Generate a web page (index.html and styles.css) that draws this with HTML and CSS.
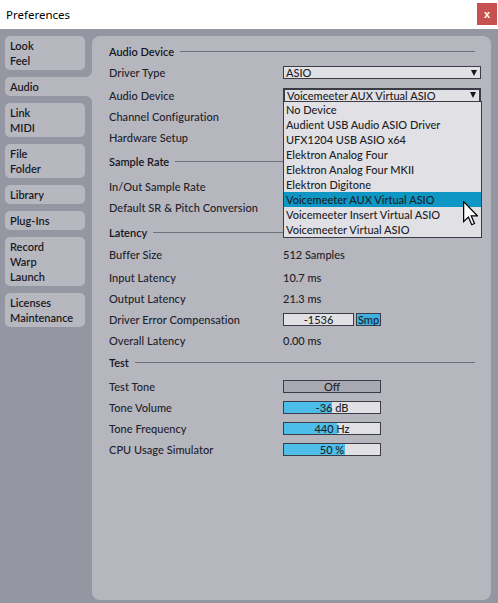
FILE: index.html
```html
<!DOCTYPE html>
<html lang="en">
<head>
    <meta charset="UTF-8">
    <meta name="viewport" content="width=device-width, initial-scale=1.0">
    <title>Preferences</title>
    <link rel="stylesheet" href="styles.css">
</head>
<body>
    <div class="window">
        <header class="titlebar">
            <span class="titlebar__title">Preferences</span>
            <button class="titlebar__close" aria-label="Close">x</button>
        </header>

        <div class="prefs">
            <nav class="tabs">
                <div class="tab">Look<br>Feel</div>
                <div class="tab tab--active">Audio</div>
                <div class="tab">Link<br>MIDI</div>
                <div class="tab">File<br>Folder</div>
                <div class="tab">Library</div>
                <div class="tab">Plug-Ins</div>
                <div class="tab">Record<br>Warp<br>Launch</div>
                <div class="tab">Licenses<br>Maintenance</div>
            </nav>

            <main class="panel">
                <div class="section">Audio Device</div>
                <div class="row">
                    <span class="row__label">Driver Type</span>
                    <div class="select">ASIO<span class="select__arrow"></span></div>
                </div>
                <div class="row row--mt2">
                    <span class="row__label">Audio Device</span>
                    <div class="dropdown">
                        <div class="select select--open">Voicemeeter AUX Virtual ASIO<span class="select__arrow"></span></div>
                        <ul class="dropdown__list">
                            <li class="dropdown__item">No Device</li>
                            <li class="dropdown__item">Audient USB Audio ASIO Driver</li>
                            <li class="dropdown__item">UFX1204 USB ASIO x64</li>
                            <li class="dropdown__item">Elektron Analog Four</li>
                            <li class="dropdown__item">Elektron Analog Four MKII</li>
                            <li class="dropdown__item">Elektron Digitone</li>
                            <li class="dropdown__item dropdown__item--hover">Voicemeeter AUX Virtual ASIO</li>
                            <li class="dropdown__item">Voicemeeter Insert Virtual ASIO</li>
                            <li class="dropdown__item">Voicemeeter Virtual ASIO</li>
                        </ul>
                        <svg class="cursor" viewBox="0 0 12 20" width="15" height="25">
                            <path d="M0.5 0.5 V16.5 L4.3 12.8 L7 19 L9.2 18 L6.6 11.9 H11.5 Z" fill="#fff" stroke="#000" stroke-width="1" stroke-linejoin="miter"/>
                        </svg>
                    </div>
                </div>
                <div class="row"><span class="row__label">Channel Configuration</span></div>
                <div class="row"><span class="row__label">Hardware Setup</span></div>

                <div class="section section--mt3">Sample Rate</div>
                <div class="row row--mt4"><span class="row__label">In/Out Sample Rate</span></div>
                <div class="row"><span class="row__label">Default SR &amp; Pitch Conversion</span></div>

                <div class="section section--mt4">Latency</div>
                <div class="row row--mt1">
                    <span class="row__label">Buffer Size</span>
                    <span class="row__value">512 Samples</span>
                </div>
                <div class="row row--mt2">
                    <span class="row__label">Input Latency</span>
                    <span class="row__value">10.7 ms</span>
                </div>
                <div class="row">
                    <span class="row__label">Output Latency</span>
                    <span class="row__value">21.3 ms</span>
                </div>
                <div class="row">
                    <span class="row__label">Driver Error Compensation</span>
                    <div class="field">-1536</div>
                    <div class="unit">Smp</div>
                </div>
                <div class="row">
                    <span class="row__label">Overall Latency</span>
                    <span class="row__value">0.00 ms</span>
                </div>

                <div class="section section--mt1">Test</div>
                <div class="row row--mt3">
                    <span class="row__label">Test Tone</span>
                    <div class="toggle">Off</div>
                </div>
                <div class="row">
                    <span class="row__label">Tone Volume</span>
                    <div class="slider"><div class="slider__fill" style="width: 48px"></div><span class="slider__text">-36 dB</span></div>
                </div>
                <div class="row">
                    <span class="row__label">Tone Frequency</span>
                    <div class="slider"><div class="slider__fill" style="width: 53px"></div><span class="slider__text">440 Hz</span></div>
                </div>
                <div class="row">
                    <span class="row__label">CPU Usage Simulator</span>
                    <div class="slider"><div class="slider__fill" style="width: 61px"></div><span class="slider__text">50 %</span></div>
                </div>
            </main>
        </div>
    </div>
</body>
</html>
```

FILE: styles.css
```css
/* Reset */
* {
    margin: 0;
    padding: 0;
    box-sizing: border-box;
}
body {
    font-family: "Lato", "Liberation Sans", sans-serif;
    font-size: 11px;
    font-weight: 500;
    color: #1e1e27;
    background-color: #9496a1;
    width: 498px;
    height: 603px;
    overflow: hidden;
}
.window {
    display: flex;
    flex-direction: column;
    height: 100%;
}

/* Title bar */
.titlebar {
    height: 29px;
    background-color: #ffffff;
    display: flex;
    align-items: center;
    justify-content: space-between;
    padding-left: 6px;
}
.titlebar__title {
    font-family: "Noto Sans", "Open Sans", sans-serif;
    font-size: 11.5px;
    font-weight: 400;
    color: #000000;
}
.titlebar__close {
    align-self: flex-start;
    margin-top: 3px;
    margin-right: 1px;
    width: 20px;
    height: 22px;
    border: none;
    background-color: #c75050;
    color: #ffffff;
    font-family: "Liberation Sans", sans-serif;
    font-size: 11px;
    font-weight: bold;
}

/* Sidebar + panel */
.prefs {
    flex: 1;
    display: flex;
    padding: 7px 7px 3px 5px;
}
.tabs {
    width: 87px;
    display: flex;
    flex-direction: column;
    gap: 7px;
}
.tab {
    position: relative;
    width: 80px;
    padding: 2px 5px 2px;
    line-height: 15px;
    font-weight: 600;
    color: #1a1a22;
    background-color: #b7b7c0;
    border-radius: 5px;
}
.tab--active {
    width: 87px;
    background-color: #b6b6bf;
    border-radius: 5px 0 0 5px;
}
.tab--active::before,
.tab--active::after {
    content: "";
    position: absolute;
    right: 0;
    width: 7px;
    height: 7px;
}
.tab--active::before {
    top: -7px;
    background: radial-gradient(circle at 0 0, transparent 7px, #b6b6bf 7.5px);
}
.tab--active::after {
    bottom: -7px;
    background: radial-gradient(circle at 0 100%, transparent 7px, #b6b6bf 7.5px);
}
.panel {
    flex: 1;
    background-color: #b6b6bf;
    border-radius: 8px;
    padding: 5px 10px 0 17px;
}

/* Section headings */
.section {
    height: 21px;
    display: flex;
    align-items: center;
    font-weight: 600;
    color: #15151c;
}
.section::after {
    content: "";
    flex: 1;
    height: 1px;
    margin: 0 6px 0 6px;
    background-color: #6f707b;
}
.section--mt1 { margin-top: 1px; }
.section--mt3 { margin-top: 3px; }
.section--mt4 { margin-top: 4px; }

/* Rows */
.row {
    height: 21px;
    display: flex;
    align-items: center;
}
.row--mt1 { margin-top: 1px; }
.row--mt2 { margin-top: 2px; }
.row--mt3 { margin-top: 3px; }
.row--mt4 { margin-top: 4px; }
.row__label {
    width: 174px;
    flex-shrink: 0;
    color: #22222b;
    letter-spacing: 0.05px;
}

/* Choosers */
.select {
    width: 198px;
    height: 13px;
    display: flex;
    align-items: center;
    justify-content: space-between;
    padding: 0 3px 0 2px;
    background-color: #e1e1e5;
    border: 1px solid #3c3c47;
    font-weight: 500;
    line-height: 11px;
}
.select--open {
    height: 14px;
    border-width: 2px 2px 1px;
}
.select__arrow {
    width: 0;
    height: 0;
    border-left: 3.5px solid transparent;
    border-right: 3.5px solid transparent;
    border-top: 6px solid #15151c;
}
.dropdown {
    position: relative;
    margin-top: -2px;
}
.dropdown__list {
    position: absolute;
    top: 13px;
    left: 0;
    width: 199px;
    list-style: none;
    background-color: #e1e1e5;
    border: 1px solid #3c3c47;
    z-index: 2;
}
.dropdown__item {
    height: 15px;
    line-height: 15px;
    padding-left: 2px;
    font-weight: 500;
    white-space: nowrap;
}
.dropdown__item--hover {
    background-color: #0e97c4;
}
.cursor {
    position: absolute;
    top: 113px;
    left: 180px;
    z-index: 3;
}

/* Values and small controls */
.row__value {
    font-weight: 500;
}
.field,
.unit,
.toggle,
.slider__text {
    line-height: 11px;
    text-align: center;
    font-weight: 500;
}
.field {
    width: 71px;
    height: 13px;
    background-color: #e1e1e5;
    border: 1px solid #3c3c47;
}
.unit {
    width: 25px;
    height: 13px;
    margin-left: 2px;
    background-color: #3fb0e2;
    border: 1px solid #3c3c47;
}
.toggle {
    width: 98px;
    height: 13px;
    background-color: #a8a9b3;
    border: 1px solid #3c3c47;
}
.slider {
    position: relative;
    width: 98px;
    height: 13px;
    background-color: #e1e1e5;
    border: 1px solid #3c3c47;
    overflow: hidden;
}
.slider__fill {
    height: 100%;
    background-color: #4dbde9;
}
.slider__text {
    position: absolute;
    inset: 0;
}
```
